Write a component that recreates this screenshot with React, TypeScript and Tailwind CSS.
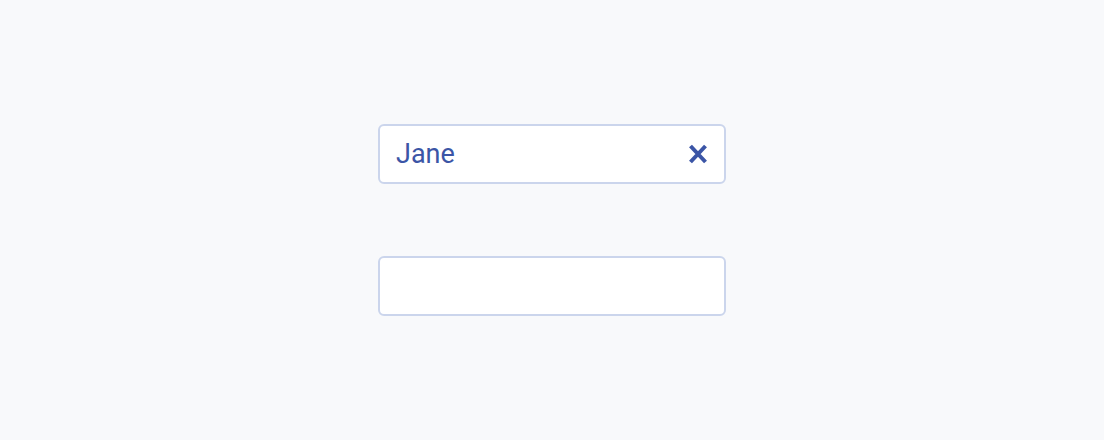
export default function App() {
  return (
    <div
      className="flex h-screen w-full flex-col items-center justify-center gap-[72px] bg-[#f8f9fb]"
      style={{ fontFamily: "Roboto, 'Liberation Sans', sans-serif" }}
    >
      <div className="flex h-[60px] w-[348px] items-center justify-between rounded-[6px] border-2 border-[#cbd5ec] bg-white pl-4 pr-4">
        <span className="text-[27px] leading-none text-[#3b55a6]">Jane</span>
        <button className="flex h-5 w-5 items-center justify-center text-[#3b55a6]" aria-label="Clear">
          <svg width="20" height="20" viewBox="0 0 20 20" fill="none" stroke="currentColor" strokeWidth="4" strokeLinecap="butt">
            <path d="M2.5 2L17.5 18M17.5 2L2.5 18" />
          </svg>
        </button>
      </div>
      <div className="h-[60px] w-[348px] rounded-[6px] border-2 border-[#cbd5ec] bg-white" />
    </div>
  );
}
